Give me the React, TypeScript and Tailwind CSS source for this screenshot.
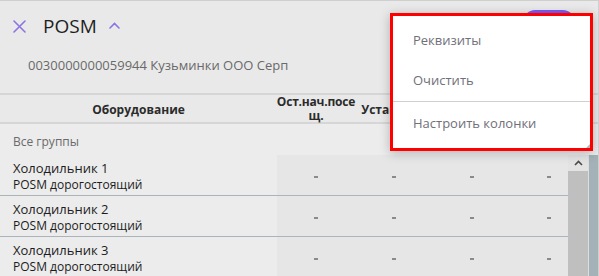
const rows = ["Холодильник 1", "Холодильник 2", "Холодильник 3"]

function Dash({ className }: { className: string }) {
    return (
        <div className={`h-full flex items-center bg-[#e6e6e6] ${className}`}>
            <span className="block w-[4px] h-[2px] mt-[3px] bg-[#8a8a8a]" />
        </div>
    )
}

export default function App() {
    return (
        <div className="relative w-[599px] h-[276px] overflow-hidden bg-[#e9e9e9] border-t border-r border-[#cfcfcf] font-['Open_Sans',sans-serif]">
            {/* title */}
            <div className="flex items-center h-[50px] pl-[13px] pr-[23px]">
                <svg width="13" height="13" viewBox="0 0 13 13" className="shrink-0">
                    <path d="M1 1L12 12M12 1L1 12" stroke="#8d74e4" strokeWidth="1.6" strokeLinecap="round" />
                </svg>
                <span className="ml-[17px] text-[19px] leading-[24px] font-medium text-[#1f1f1f]">POSM</span>
                <svg width="11" height="7" viewBox="0 0 11 7" className="ml-[12px] -mt-[1px]">
                    <path d="M1 6L5.5 1.5L10 6" stroke="#8d74e4" strokeWidth="1.6" fill="none" strokeLinecap="round" />
                </svg>
                <div className="ml-auto self-start mt-[9px] w-[52px] h-[24px] rounded-[12px] bg-[#7a5af8]" />
            </div>
            <div className="h-[42px] pl-[28px] pt-[6px] text-[13px] leading-[16px] text-[#6a6a6a]">
                0030000000059944 Кузьминки ООО Серп
            </div>
            <div className="h-[2px] bg-[#d6d6d6]" />

            {/* table header */}
            <div className="flex h-[27px] text-[12px] font-bold text-[#2b2b2b]">
                <div className="w-[277px] flex items-center justify-center pt-[2px]">Оборудование</div>
                <div className="w-[78px] flex flex-col items-center justify-center text-center leading-[14px] tracking-[-0.2px]">
                    <span>Ост.нач.посе</span>
                    <span>щ.</span>
                </div>
                <div className="w-[78px] flex items-center justify-center whitespace-nowrap pt-[2px]">Установка</div>
            </div>
            <div className="h-[2px] bg-[#d6d6d6]" />

            {/* body */}
            <div className="bg-[#ececec]">
                <div className="h-[31px] pl-[13px] pt-[10px] text-[12px] leading-[16px] text-[#6a6a6a]">Все группы</div>
                <div className="flex">
                    <div className="w-[568px]">
                        {rows.map((name, i) => (
                            <div key={name} className={`flex h-[41px] ${i < 2 ? "border-b border-[#a9b5ba]" : ""}`}>
                                <div className="w-[277px] pl-[13px] pt-[6px] text-[13px] leading-[15px] text-[#1c1c1c]">
                                    <div>{name}</div>
                                    <div className="text-[12px] mt-[1px]">POSM дорогостоящий</div>
                                </div>
                                <Dash className="w-[78px] justify-center" />
                                <Dash className="w-[78px] justify-center" />
                                <Dash className="w-[78px] justify-center" />
                                <Dash className="w-[57px] pl-[36px]" />
                            </div>
                        ))}
                    </div>
                    <div className="w-[20px] h-[122px] bg-[#bfbfbf]">
                        <div className="h-[16px] bg-[#e3e3e3] flex items-center justify-center">
                            <svg width="9" height="6" viewBox="0 0 9 6">
                                <path d="M1 5L4.5 1.5L8 5" stroke="#4a4a4a" strokeWidth="1.6" fill="none" />
                            </svg>
                        </div>
                    </div>
                    <div className="w-[1px] bg-[#d9dee0]" />
                    <div className="w-[9px] h-[122px] bg-[#a4b1b7]" />
                </div>
            </div>

            {/* context menu */}
            <div className="absolute left-[390px] top-[12px] w-[203px] h-[138px] border-[3px] border-[#ff0000] bg-white shadow-[0_2px_10px_rgba(0,0,0,0.25)] text-[13px] text-[#707079]">
                <div className="pt-[5px]">
                    <div className="h-[40px] flex items-center pl-[20px]">Реквизиты</div>
                    <div className="h-[40px] flex items-center pl-[20px]">Очистить</div>
                    <div className="h-[1px] bg-[#cfcfcf]" />
                    <div className="h-[44px] flex items-center pl-[20px]">Настроить колонки</div>
                </div>
                <svg width="4" height="4" viewBox="0 0 4 4" className="absolute right-0 bottom-0">
                    <path d="M4 0V4H0Z" fill="#b5b5b5" />
                </svg>
            </div>
        </div>
    )
}
